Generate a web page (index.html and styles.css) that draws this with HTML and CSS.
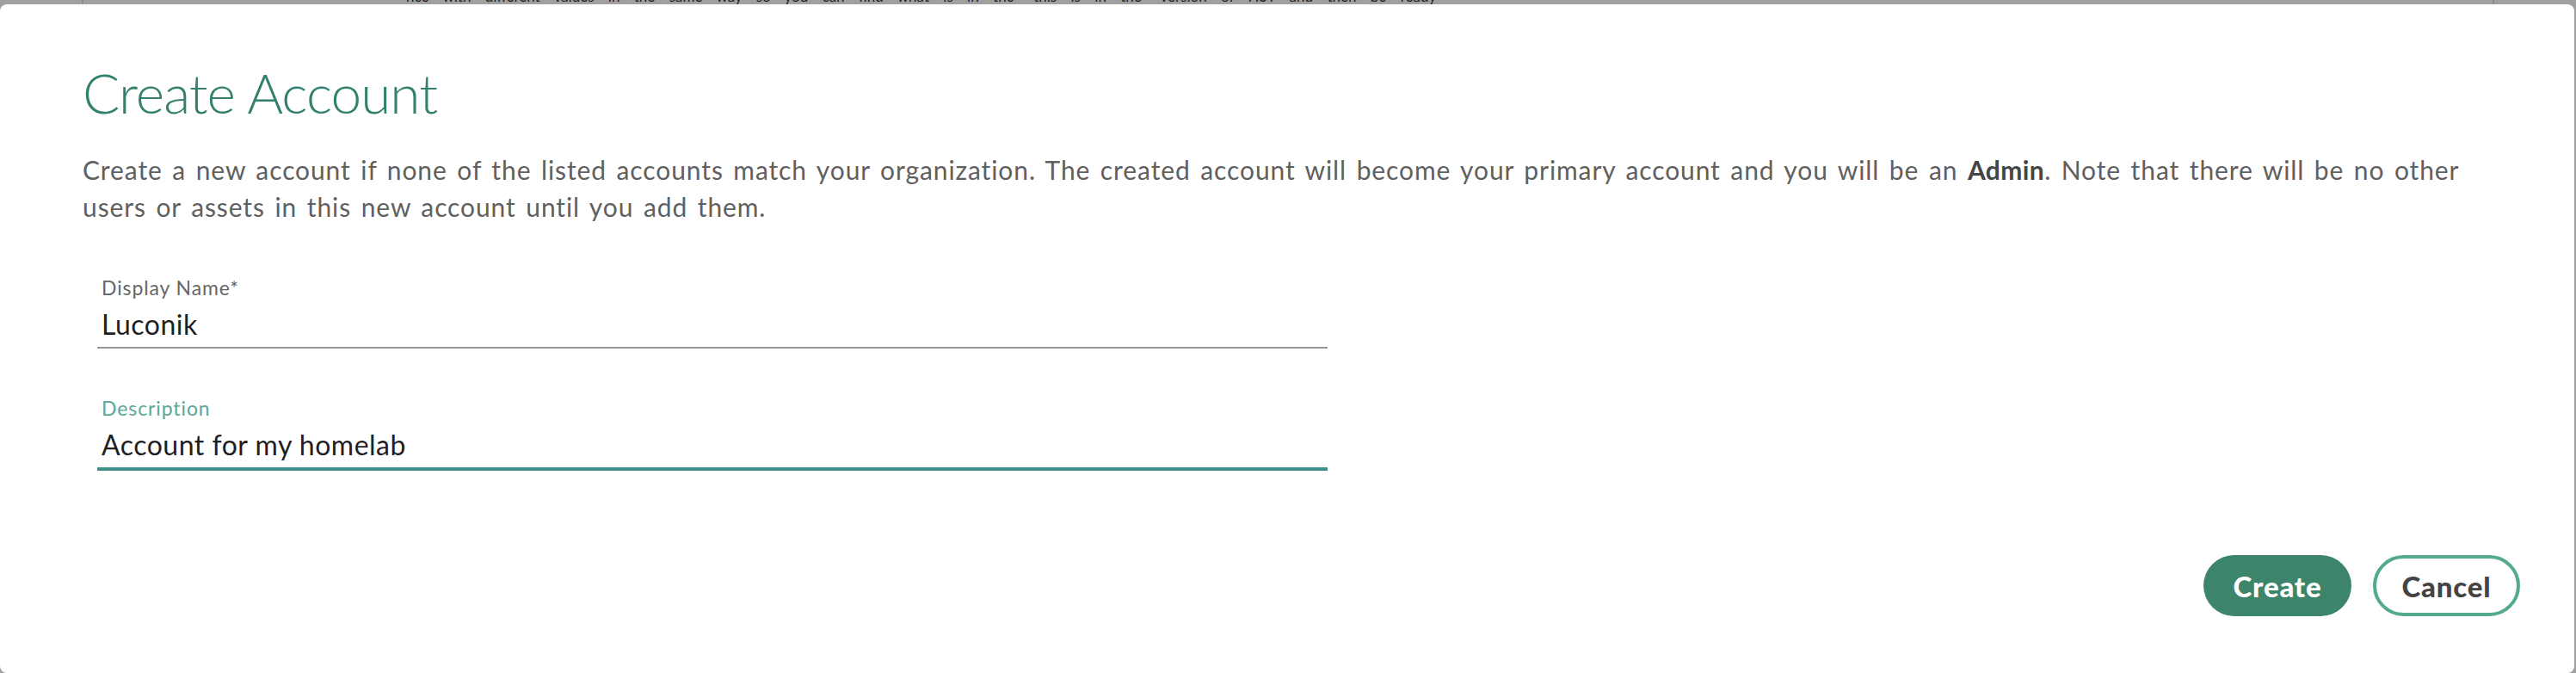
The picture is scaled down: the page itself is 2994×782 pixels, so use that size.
FILE: index.html
```html
<!DOCTYPE html>
<html lang="en">
<head>
<meta charset="utf-8">
<title>Create Account</title>
<link rel="stylesheet" href="styles.css">
</head>
<body>
  <div class="backdrop">
    <div class="bg-cell bg-first"></div>
    <div class="bg-cell bg-main"><span class="bg-text">nce with different values in the same way so you can find what is in the “this is in the” version of HST and then be ready</span></div>
    <div class="bg-cell bg-last"></div>
  </div>
  <div class="modal">
    <h1 class="title">Create Account</h1>
    <p class="intro">Create a new account if none of the listed accounts match your organization. The created account will become your primary account and you will be an <b>Admin</b>. Note that there will be no other users or assets in this new account until you add them.</p>
    <div class="field">
      <label class="field-label">Display Name*</label>
      <div class="field-value">Luconik</div>
    </div>
    <div class="field field-focus">
      <label class="field-label">Description</label>
      <div class="field-value">Account for my homelab</div>
    </div>
    <div class="actions">
      <button class="btn btn-primary">Create</button>
      <button class="btn btn-secondary">Cancel</button>
    </div>
  </div>
</body>
</html>
```
FILE: styles.css
```css
html, body {
  margin: 0;
  padding: 0;
}
body {
  background: #a0a0a0;
  overflow: hidden;
  font-family: Lato, "Open Sans", sans-serif;
}
.backdrop {
  height: 5px;
  overflow: hidden;
  display: flex;
}
.bg-cell {
  height: 5px;
}
.bg-first {
  width: 95px;
  border-right: 2px solid #8c8c8c;
}
.bg-main {
  flex: 1;
  padding-left: 375px;
}
.bg-last {
  width: 95px;
  border-left: 2px solid #8c8c8c;
}
.bg-text {
  display: block;
  margin-top: -14px;
  font-size: 17px;
  line-height: 20px;
  color: #1e1e1e;
  white-space: nowrap;
  word-spacing: 12px;
}
.modal {
  background: #ffffff;
  margin-right: 2px;
  height: 777px;
  border-radius: 8px;
  box-sizing: border-box;
  padding: 65px 63px 0 96px;
  display: flex;
  flex-direction: column;
}
.title {
  margin: 0;
  font-family: Lato, sans-serif;
  font-weight: 300;
  font-size: 64px;
  line-height: 76px;
  letter-spacing: -1px;
  color: #33806f;
}
.intro {
  margin: 30px 0 0 0;
  max-width: 2790px;
  font-size: 30px;
  line-height: 43px;
  letter-spacing: 0.9px;
  word-spacing: 3px;
  color: #606060;
}
.intro b {
  color: #454545;
  font-weight: 700;
  letter-spacing: 0.4px;
}
.field {
  width: 1430px;
  margin-left: 17px;
  margin-top: 59px;
  padding: 0 0 0 5px;
  box-sizing: border-box;
  border-bottom: 2px solid #969696;
}
.field + .field {
  margin-top: 56px;
}
.field-focus {
  border-bottom: 4px solid #40908a;
}
.field-label {
  display: block;
  font-size: 23px;
  line-height: 26px;
  letter-spacing: 0.9px;
  color: #666666;
}
.field-focus .field-label {
  color: #5aa898;
}
.field-value {
  margin-top: 10px;
  padding-bottom: 6px;
  font-size: 32px;
  line-height: 40px;
  letter-spacing: 0.5px;
  color: #1f1f1f;
}
.actions {
  margin-top: 98px;
  display: flex;
  justify-content: flex-end;
  gap: 25px;
}
.btn {
  height: 71px;
  width: 172px;
  border-radius: 36px;
  font-family: Lato, sans-serif;
  font-weight: 900;
  font-size: 33px;
  letter-spacing: 0.8px;
  box-sizing: border-box;
  cursor: pointer;
  padding: 0;
}
.btn-primary {
  background: #3c856a;
  border: none;
  color: #ffffff;
}
.btn-secondary {
  background: #ffffff;
  border: 4px solid #54aa8c;
  color: #444444;
  width: 171px;
}
```
